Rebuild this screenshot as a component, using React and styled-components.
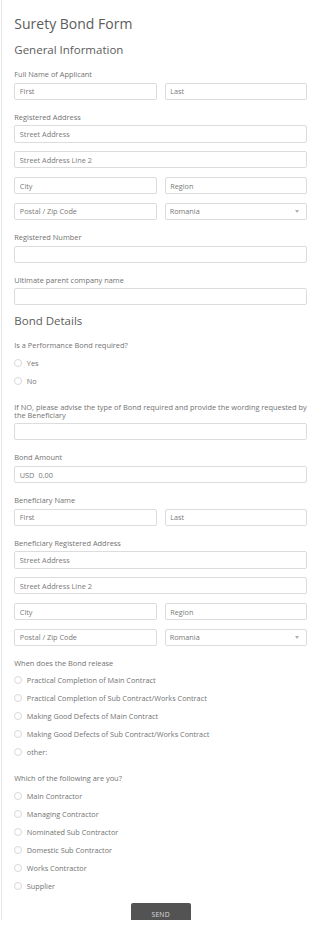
import styled, { createGlobalStyle } from "styled-components";

const GlobalStyle = createGlobalStyle`
  html, body {
    margin: 0;
    padding: 0;
    background: #fff;
  }
  body {
    font-family: "Open Sans", "Liberation Sans", sans-serif;
  }
  * {
    box-sizing: border-box;
  }
`;

const Page = styled.div`
  margin-left: 1px;
  height: 920px;
  overflow: hidden;
  border-left: 1px solid #e8e8e8;
  padding: 15px 13px 0 12.3px;
`;

const Title = styled.h1`
  margin: 0;
  font-size: 14px;
  line-height: 18px;
  font-weight: 400;
  color: #5c5c5c;
`;

const SectionTitle = styled.h2`
  margin: ${(p) => p.$gap}px 0 0;
  font-size: 11.5px;
  line-height: 15px;
  font-weight: 400;
  color: #5c5c5c;
`;

const Field = styled.div`
  margin-top: 13px;
`;

const Label = styled.div`
  font-size: 7.4px;
  line-height: 8px;
  color: #727272;
  margin-bottom: 4.5px;
`;

const Stack = styled.div`
  display: flex;
  flex-direction: column;
  gap: 8.6px;
`;

const Pair = styled.div`
  display: grid;
  grid-template-columns: 1fr 1fr;
  gap: 8px;
`;

const Input = styled.input`
  display: block;
  width: 100%;
  height: 17.2px;
  margin: 0;
  padding: 0 4.5px;
  border: 1px solid #dcdcdc;
  border-radius: 2px;
  background: #fff;
  font-family: inherit;
  font-size: 7.3px;
  color: #666;
  outline: none;
  &::placeholder {
    color: #7a7a7a;
  }
`;

const SelectWrap = styled.div`
  position: relative;
`;

const Select = styled.select`
  display: block;
  width: 100%;
  height: 17.2px;
  margin: 0;
  padding: 0 4px;
  border: 1px solid #dcdcdc;
  border-radius: 2px;
  background: #fff;
  font-family: inherit;
  font-size: 7.3px;
  color: #777;
  appearance: none;
  outline: none;
`;

const Caret = styled.svg`
  position: absolute;
  right: 8px;
  top: 7.5px;
  width: 4px;
  height: 3px;
  pointer-events: none;
`;

const Money = styled.div`
  display: flex;
  align-items: center;
  height: 17.2px;
  padding: 0 4.5px;
  border: 1px solid #dcdcdc;
  border-radius: 2px;
  font-size: 7.3px;
  color: #777;
  span {
    margin-right: 4px;
  }
  input {
    flex: 1;
    min-width: 0;
    border: none;
    padding: 0;
    font-family: inherit;
    font-size: 7.3px;
    color: #777;
    outline: none;
  }
  input::placeholder {
    color: #777;
  }
`;

const RadioRow = styled.label`
  display: flex;
  align-items: center;
  height: 18px;
  font-size: 7.3px;
  color: #727272;
`;

const Circle = styled.span`
  width: 8px;
  height: 8px;
  border-radius: 50%;
  border: 1px solid #d8d8d8;
  background: #fff;
  margin-right: 4.5px;
  flex-shrink: 0;
`;

const Actions = styled.div`
  display: flex;
  justify-content: center;
  margin-top: 8.3px;
`;

const SendButton = styled.button`
  width: 60px;
  height: 22px;
  border: none;
  border-radius: 2px;
  background: #535353;
  color: #dcdcdc;
  font-family: inherit;
  font-size: 6.8px;
  letter-spacing: 0.2px;
  padding: 0;
`;

const CountrySelect = () => (
  <SelectWrap>
    <Select defaultValue="Romania">
      <option>Romania</option>
    </Select>
    <Caret viewBox="0 0 4 3">
      <path d="M0 0 L4 0 L2 3 Z" fill="#b0b0b0" />
    </Caret>
  </SelectWrap>
);

const Address = () => (
  <Stack>
    <Input placeholder="Street Address" />
    <Input placeholder="Street Address Line 2" />
    <Pair>
      <Input placeholder="City" />
      <Input placeholder="Region" />
    </Pair>
    <Pair>
      <Input placeholder="Postal / Zip Code" />
      <CountrySelect />
    </Pair>
  </Stack>
);

const RadioGroup = ({ options }) => (
  <div>
    {options.map((o) => (
      <RadioRow key={o}>
        <Circle />
        {o}
      </RadioRow>
    ))}
  </div>
);

export default function App() {
  return (
    <>
      <GlobalStyle />
      <Page>
        <Title>Surety Bond Form</Title>
        <SectionTitle $gap={9.3}>General Information</SectionTitle>

        <Field>
          <Label>Full Name of Applicant</Label>
          <Pair>
            <Input placeholder="First" />
            <Input placeholder="Last" />
          </Pair>
        </Field>

        <Field>
          <Label>Registered Address</Label>
          <Address />
        </Field>

        <Field>
          <Label>Registered Number</Label>
          <Input />
        </Field>

        <Field>
          <Label>Ultimate parent company name</Label>
          <Input />
        </Field>

        <SectionTitle $gap={7.9}>Bond Details</SectionTitle>

        <Field>
          <Label>Is a Performance Bond required?</Label>
          <RadioGroup options={["Yes", "No"]} />
        </Field>

        <Field>
          <Label>
            If NO, please advise the type of Bond required and provide the
            wording requested by
            <br />
            the Beneficiary
          </Label>
          <Input />
        </Field>

        <Field>
          <Label>Bond Amount</Label>
          <Money>
            <span>USD</span>
            <input placeholder="0.00" />
          </Money>
        </Field>

        <Field>
          <Label>Beneficiary Name</Label>
          <Pair>
            <Input placeholder="First" />
            <Input placeholder="Last" />
          </Pair>
        </Field>

        <Field>
          <Label>Beneficiary Registered Address</Label>
          <Address />
        </Field>

        <Field>
          <Label>When does the Bond release</Label>
          <RadioGroup
            options={[
              "Practical Completion of Main Contract",
              "Practical Completion of Sub Contract/Works Contract",
              "Making Good Defects of Main Contract",
              "Making Good Defects of Sub Contract/Works Contract",
              "other:",
            ]}
          />
        </Field>

        <Field>
          <Label>Which of the following are you?</Label>
          <RadioGroup
            options={[
              "Main Contractor",
              "Managing Contractor",
              "Nominated Sub Contractor",
              "Domestic Sub Contractor",
              "Works Contractor",
              "Supplier",
            ]}
          />
        </Field>

        <Actions>
          <SendButton type="button">SEND</SendButton>
        </Actions>
      </Page>
    </>
  );
}
